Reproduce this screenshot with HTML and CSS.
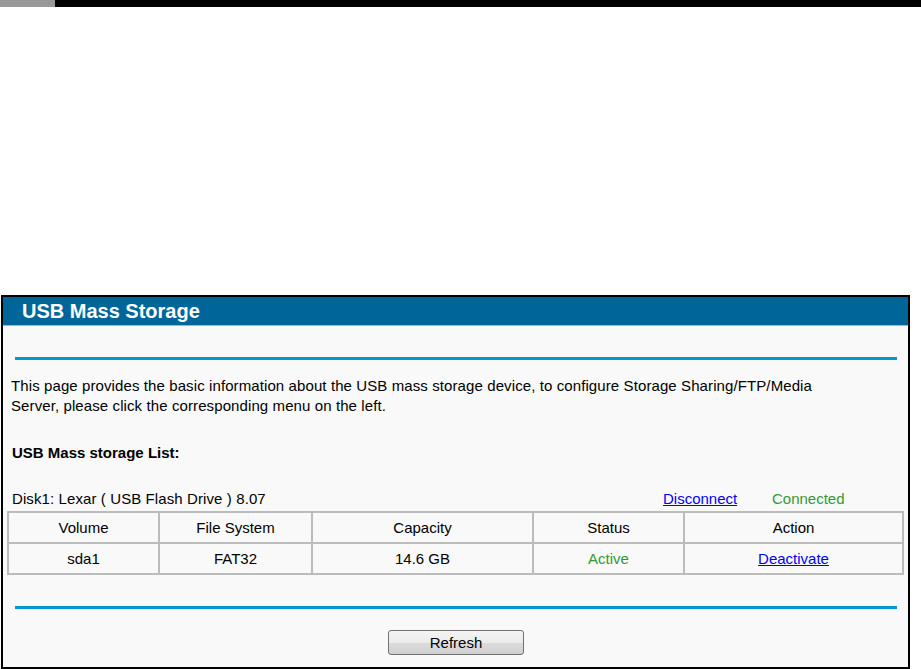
FILE: index.html
```html
<!DOCTYPE html>
<html lang="en">
  <head>
    <meta charset="UTF-8" />
    <title>USB Mass Storage</title>
    <link rel="stylesheet" href="styles.css">
  </head>
  <body>
    <div class="topbar">
      <div class="topbar-tab"></div>
      <div class="topbar-rest"></div>
    </div>

    <div class="panel">
      <div class="panel-title">USB Mass Storage</div>
      <div class="panel-body">
        <hr class="rule rule-top">
        <p class="intro">
          This page provides the basic information about the USB mass storage device, to configure Storage Sharing/FTP/Media<br>
          Server, please click the corresponding menu on the left.
        </p>
        <h4 class="list-title">USB Mass storage List:</h4>

        <div class="disk-line">
          <span class="disk-name">Disk1: Lexar ( USB Flash Drive ) 8.07</span>
          <a href="#" class="disk-link">Disconnect</a>
          <span class="disk-state">Connected</span>
        </div>
        <table class="volumes">
          <tr>
            <th class="c-vol">Volume</th>
            <th class="c-fs">File System</th>
            <th class="c-cap">Capacity</th>
            <th class="c-status">Status</th>
            <th class="c-action">Action</th>
          </tr>
          <tr>
            <td>sda1</td>
            <td>FAT32</td>
            <td>14.6 GB</td>
            <td class="ok">Active</td>
            <td><a href="#">Deactivate</a></td>
          </tr>
        </table>

        <hr class="rule rule-bottom">
        <div class="buttons">
          <button type="button" class="btn">Refresh</button>
        </div>
      </div>
    </div>
  </body>
</html>
```

FILE: styles.css
```css
body {
  margin: 0;
  background: #ffffff;
  font-family: "Liberation Sans", Arial, sans-serif;
  font-size: 15px;
  color: #000000;
}
.topbar {
  display: flex;
  height: 7px;
}
.topbar-tab {
  width: 55px;
  background: #999999;
}
.topbar-rest {
  flex: 1;
  background: #000000;
}

.panel {
  margin: 288px 0 0 1px;
  width: 905px;
  height: 370px;
  border: 2px solid #000000;
  background: #f9f9f9;
  overflow: hidden;
}
.panel-title {
  height: 28px;
  line-height: 28px;
  padding-left: 19px;
  background: #006699;
  border-top: 1px solid #d8d8d8;
  border-bottom: 1px solid #7fc1df;
  margin-top: -1px;
  color: #ffffff;
  font-size: 20px;
  font-weight: bold;
}
.panel-body {
  padding: 0 4px 0 4px;
}
.rule {
  border: none;
  height: 3px;
  background: #0099cc;
  margin: 0 7px 0 8px;
}
.rule-top {
  margin-top: 31px;
}
.intro {
  margin: 16px 0 0 4px;
  line-height: 20px;
  letter-spacing: 0.1px;
}
.list-title {
  margin: 27px 0 0 5px;
  font-size: 15px;
  line-height: 20px;
}
.disk-line {
  display: flex;
  margin: 26px 0 0 5px;
  line-height: 20px;
}
.disk-name {
  width: 651px;
  letter-spacing: 0.1px;
}
.disk-link {
  color: #0000ff;
  width: 109px;
}
.disk-state {
  color: #339933;
}
.volumes {
  margin: 2px 0 0 0;
  width: 897px;
  border-collapse: collapse;
  border: 2px solid #bcbcbc;
}
.volumes th,
.volumes td {
  border: 2px solid #bcbcbc;
  text-align: center;
  font-weight: normal;
  height: 29px;
  padding: 0;
}
.volumes .c-vol { width: 149px; }
.volumes .c-fs { width: 151px; }
.volumes .c-cap { width: 219px; }
.volumes .c-status { width: 149px; }
.volumes a {
  color: #0000ff;
}
.volumes .ok {
  color: #339933;
}
.rule-bottom {
  margin-top: 31px;
}
.buttons {
  display: flex;
  justify-content: center;
  margin: 21px 0 0 0;
  padding-left: 1px;
}
.btn {
  width: 136px;
  height: 25px;
  font-family: "Liberation Sans", Arial, sans-serif;
  font-size: 15px;
  color: #000000;
  border: 1px solid #707070;
  border-radius: 3px;
  background: linear-gradient(#f4f4f4 0%, #ebebeb 50%, #dddddd 51%, #cfcfcf 100%);
}
```
